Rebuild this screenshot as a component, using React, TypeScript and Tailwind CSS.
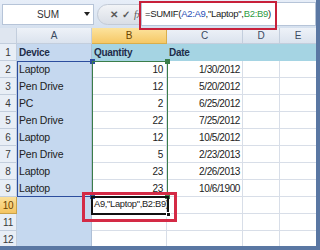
import React from "react";

const rows: [string, string, string][] = [
  ["Laptop", "10", "1/30/2012"],
  ["Pen Drive", "12", "5/20/2012"],
  ["PC", "2", "6/25/2012"],
  ["Pen Drive", "22", "7/25/2012"],
  ["Laptop", "12", "10/5/2012"],
  ["Pen Drive", "5", "2/23/2013"],
  ["Laptop", "23", "2/26/2013"],
  ["Laptop", "23", "10/6/1900"],
];

const grid = "grid grid-cols-[17px_75px_75px_76px_37px_36px] h-[17px]";

function RowHead({ n, active }: { n: number; active?: boolean }) {
  return (
    <div
      className={
        active
          ? "flex items-center justify-center border-b border-r border-[#c9a24a] bg-gradient-to-b from-[#fbe09a] to-[#f4c460] text-[#6b4300] text-[10px] tracking-[-0.3px]"
          : "flex items-center justify-center border-b border-r border-[#c3cedd] bg-[#e8eef6] text-[#3a3a3a] text-[10px] tracking-[-0.3px]"
      }
    >
      {n}
    </div>
  );
}

export default function App() {
  return (
    <div className="relative w-[320px] h-[250px] overflow-hidden bg-white font-['Liberation_Sans',Arial,sans-serif] border-r-[4px] border-b-[4px] border-[#5a77a3]">
      {/* Formula bar */}
      <div className="flex items-center h-[28px] bg-gradient-to-b from-[#e7eef8] to-[#d6e1ef] pl-[2px]">
        <div className="relative flex items-center justify-center w-[92px] h-[21px] bg-white border border-[#b6c4d8] text-[10px] text-[#333]">
          SUM
          <span className="absolute right-[3px] top-[7px] w-0 h-0 border-l-[3px] border-r-[3px] border-t-[4px] border-l-transparent border-r-transparent border-t-[#222]" />
        </div>
        <div className="flex items-center h-[21px] ml-[3px] w-[44px] rounded-l-full bg-gradient-to-b from-[#f2f4f7] to-[#d9dee6] border border-[#c2cad6] pl-[12px] gap-[4px] text-[10px] text-[#555]">
          <span className="font-bold text-[#5a5a5a]">✕</span>
          <span className="font-bold text-[#5a5a5a]">✓</span>
          <span className="italic font-['Liberation_Serif',serif] text-[10px] text-[#555]">fx</span>
        </div>
        <div className="flex items-center flex-1 h-[24px] bg-white border border-[#b6c4d8] pl-[3px] text-[9.5px] tracking-[-0.3px] text-[#222] whitespace-nowrap">
          =SUMIF(<span className="text-[#2a4fb5]">A2:A9</span>,"Laptop",<span className="text-[#2e9c3f]">B2:B9</span>)
        </div>
      </div>

      {/* Column headers */}
      <div className="grid grid-cols-[17px_75px_75px_76px_37px_36px] h-[16px] text-[10px] text-[#3a4a60]">
        <div className="border-b border-r border-[#c3cedd] bg-[#dfe6f0]" />
        <div className="flex items-center justify-center border-b border-r border-[#c3cedd] bg-gradient-to-b from-[#eef2f8] to-[#dbe3ee]">A</div>
        <div className="flex items-center justify-center border-b border-r border-[#d9ae4c] bg-gradient-to-b from-[#fce39d] to-[#f5c865] text-[#6b4300]">B</div>
        <div className="flex items-center justify-center border-b border-r border-[#c3cedd] bg-gradient-to-b from-[#eef2f8] to-[#dbe3ee]">C</div>
        <div className="flex items-center justify-center border-b border-r border-[#c3cedd] bg-gradient-to-b from-[#eef2f8] to-[#dbe3ee]">D</div>
        <div className="flex items-center justify-center border-b border-[#c3cedd] bg-gradient-to-b from-[#eef2f8] to-[#dbe3ee]">E</div>
      </div>

      {/* Row 1 */}
      <div className={grid}>
        <RowHead n={1} />
        <div className="flex items-center pl-[2px] bg-[#c5d8ef] border-r border-[#aebfd6] text-[10px] tracking-[-0.3px] font-bold text-[#1f2d4a]">Device</div>
        <div className="flex items-center pl-[2px] bg-[#a5d4e3] text-[10px] tracking-[-0.3px] font-bold text-[#1f2d4a]">Quantity</div>
        <div className="flex items-center pl-[2px] bg-[#a5d4e3] text-[10px] tracking-[-0.3px] font-bold text-[#1f2d4a]">Date</div>
        <div className="bg-[#a5d4e3]" />
        <div className="bg-[#a5d4e3]" />
      </div>

      {rows.map((r, i) => (
        <div key={i} className={grid}>
          <RowHead n={i + 2} />
          <div className="flex items-center pl-[2px] bg-[#c5d8ef] border-r border-[#aebfd6] text-[10.5px] tracking-[-0.2px] text-[#222]">{r[0]}</div>
          <div className="flex items-center justify-end pr-[3px] border-b border-r border-[#d8dee8] text-[10px] tracking-[-0.3px] text-[#222]">{r[1]}</div>
          <div className="flex items-center justify-end pr-[2px] border-b border-r border-[#d8dee8] text-[10px] tracking-[-0.4px] text-[#222]">{r[2]}</div>
          <div className="border-b border-r border-[#d8dee8]" />
          <div className="border-b border-[#d8dee8]" />
        </div>
      ))}

      {[10, 11, 12].map((n) => (
        <div key={n} className={grid}>
          <RowHead n={n} active={n === 10} />
          <div className="bg-[#c5d8ef] border-r border-[#aebfd6]" />
          <div className="flex items-center pl-[2px] border-b border-r border-[#d8dee8] text-[9.3px] tracking-[-0.3px] text-[#222] whitespace-nowrap">
            {n === 10 ? 'A9,"Laptop",B2:B9)' : ""}
          </div>
          <div className="border-b border-r border-[#d8dee8]" />
          <div className="border-b border-r border-[#d8dee8]" />
          <div className="border-b border-[#d8dee8]" />
        </div>
      ))}

      {/* Range A2:A9 reference border */}
      <div className="absolute left-[17px] top-[61px] w-[76px] h-[136px] border border-[#2c4d9e] pointer-events-none">
        <span className="absolute -right-[3px] -top-[3px] w-[5px] h-[5px] bg-[#2c4d9e]" />
        <span className="absolute -right-[3px] -bottom-[3px] w-[5px] h-[5px] bg-[#2c4d9e]" />
      </div>
      {/* Range B2:B9 reference border */}
      <div className="absolute left-[92px] top-[61px] w-[76px] h-[136px] border border-[#3b7d4a] pointer-events-none">
        <span className="absolute -right-[3px] -top-[3px] w-[5px] h-[5px] bg-[#3b7d4a]" />
        <span className="absolute -right-[3px] -bottom-[3px] w-[5px] h-[5px] bg-[#3b7d4a]" />
      </div>
      {/* Active cell B10 */}
      <div className="absolute left-[91px] top-[196px] w-[78px] h-[19px] border-2 border-[#111] pointer-events-none">
        <span className="absolute -right-[4px] -bottom-[4px] w-[5px] h-[5px] bg-[#111] border border-white" />
      </div>

      {/* Red annotation boxes */}
      <div className="absolute left-[139px] top-[1px] w-[138px] h-[29px] border-[2px] border-[#c8203a] pointer-events-none" />
      <div className="absolute left-[82px] top-[192px] w-[95px] h-[30px] border-[3px] border-[#d42a45] pointer-events-none" />
    </div>
  );
}
